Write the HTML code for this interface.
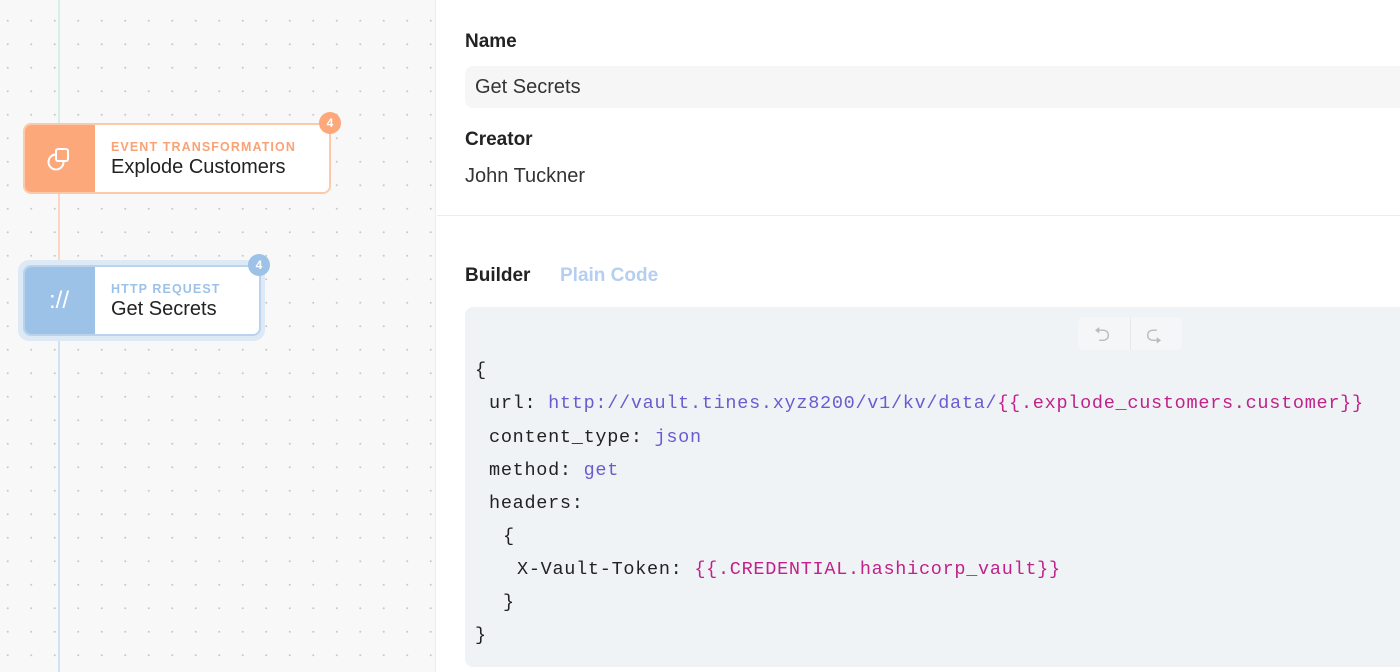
<!DOCTYPE html>
<html><head><style>
*{margin:0;padding:0;box-sizing:border-box}
body{width:1400px;height:672px;overflow:hidden;background:#fff;font-family:"Liberation Sans",sans-serif;position:relative}
.left{position:absolute;left:0;top:0;width:436px;height:672px;background-color:#f8f8f8;background-image:radial-gradient(circle,#c9c9c9 0.8px,transparent 1.2px);background-size:23.5px 23.5px;background-position:-4px 9px;border-right:1px solid #ececec}
.line{position:absolute;left:58px;width:2px}
.node{position:absolute;background:#fff;border-radius:8px;overflow:hidden}
.ic{position:absolute;left:0;top:0;bottom:0;width:71px;display:flex;align-items:center;justify-content:center;color:#fff}
.lbl{position:absolute;left:86px;font-size:12.5px;font-weight:bold;letter-spacing:1.1px}
.nm{position:absolute;left:86px;font-size:20px;color:#222}
.badge{position:absolute;width:22px;height:22px;border-radius:50%;color:#fff;font-size:12px;font-weight:bold;text-align:center;line-height:22px}
.right{position:absolute;left:437px;top:0;right:0;height:672px}
.h{position:absolute;left:28px;font-size:19px;font-weight:bold;color:#222}
.code{position:absolute;left:465px;top:307px;width:960px;height:360px;background:#f0f3f6;border-radius:8px;font-family:"Liberation Mono",monospace;font-size:18.5px;color:#222;letter-spacing:0.72px}
.code div{position:absolute;white-space:pre}
.p{color:#6a5cd0}.m{color:#c0218a}
</style></head><body>
<div class="left">
<div class="line" style="top:0;height:123px;background:#d7efe9"></div>
<div class="line" style="top:193px;height:72px;background:#fbd6c2"></div>
<div class="line" style="top:336px;height:336px;background:#cfe1f3"></div>
<div class="node" style="left:23px;top:123px;width:308px;height:71px;border:2px solid #fcc9ab">
 <div class="ic" style="background:#fca87b;left:-2px;top:-2px;bottom:-2px;width:72px">
  <svg width="28" height="28" viewBox="0 0 28 28" fill="none" stroke="#fff" stroke-width="2"><rect x="11" y="4" width="12" height="12" rx="2"/><path d="M11 9.5A7.5 7.5 0 1 0 18.5 17"/></svg>
 </div>
 <div class="lbl" style="top:15px;color:#f9a277">EVENT TRANSFORMATION</div>
 <div class="nm" style="top:31px">Explode Customers</div>
</div>
<div class="badge" style="left:319px;top:112px;background:#fca87b">4</div>
<div style="position:absolute;left:18px;top:260px;width:247px;height:81px;border-radius:11px;background:#dde9f5"></div>
<div class="node" style="left:23px;top:265px;width:238px;height:71px;border:2px solid #b9d3ee">
 <div class="ic" style="background:#9dc2e7;left:-2px;top:-2px;bottom:-2px;width:72px;font-size:24px">://</div>
 <div class="lbl" style="top:15px;color:#9dc2e7">HTTP REQUEST</div>
 <div class="nm" style="top:31px">Get Secrets</div>
</div>
<div class="badge" style="left:248px;top:254px;background:#9dc2e7">4</div>
</div>
<div class="right">
<div class="h" style="top:31px">Name</div>
<div style="position:absolute;left:28px;top:66px;width:960px;height:42px;background:#f6f6f6;border-radius:8px;font-size:20px;color:#333;padding:10px 10px">Get Secrets</div>
<div class="h" style="top:129px">Creator</div>
<div style="position:absolute;left:28px;top:165px;font-size:20px;color:#333">John Tuckner</div>
<div style="position:absolute;left:0;right:0;top:215px;height:1px;background:#ececec"></div>
<div class="h" style="top:265px">Builder</div>
<div style="position:absolute;left:123px;top:265px;font-size:19px;font-weight:bold;color:#b6cef0">Plain Code</div>
</div>
<div class="code">
<div style="left:613px;top:10px;width:104px;height:33px;background:#f5f6f8;border-radius:6px;color:#bbb;font-family:'Liberation Sans';font-size:20px">
 <span style="position:absolute;left:16px;top:3px">⮌</span><span style="position:absolute;left:52px;top:0;width:1px;height:33px;background:#e8e8e8"></span><span style="position:absolute;left:68px;top:3px">⮎</span></div>
<div style="left:10px;top:53px">{</div>
<div style="left:24px;top:86px">url: <span class="p">http://vault.tines.xyz8200/v1/kv/data/</span><span class="m">{{.explode_customers.customer}}</span></div>
<div style="left:24px;top:120px">content_type: <span class="p">json</span></div>
<div style="left:24px;top:153px">method: <span class="p">get</span></div>
<div style="left:24px;top:186px">headers:</div>
<div style="left:38px;top:219px">{</div>
<div style="left:52px;top:252px">X-Vault-Token: <span class="m">{{.CREDENTIAL.hashicorp_vault}}</span></div>
<div style="left:38px;top:285px">}</div>
<div style="left:10px;top:318px">}</div>
</div>
</body></html>
